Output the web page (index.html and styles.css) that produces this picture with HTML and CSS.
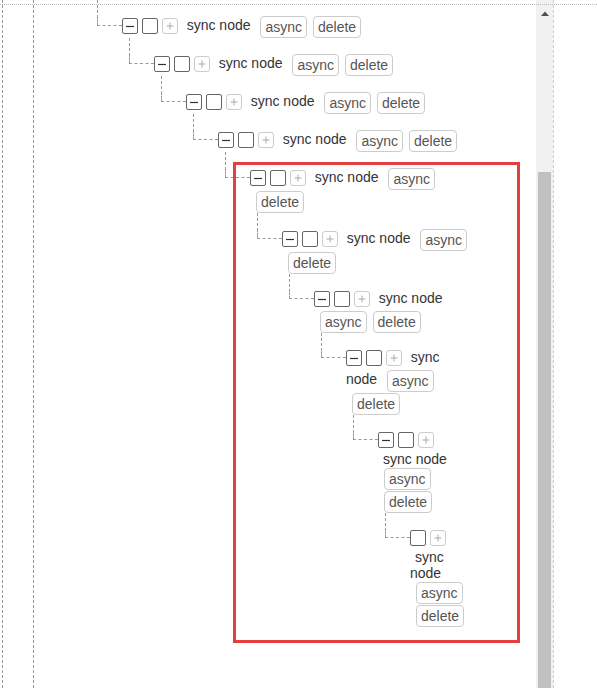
FILE: index.html
```html
<!DOCTYPE html>
<html lang="en">
<head>
<meta charset="utf-8">
<title>Tree</title>
<link rel="stylesheet" href="styles.css">
</head>
<body>
<div class="viewport">
  <div class="panel">
    <div class="content">
      <div class="guide">
        <ul class="tree">
          <li class="node">
            <div class="row"><span class="box"><svg width="14" height="14" viewBox="0 0 14 14"><path d="M3 7.5h8" stroke="#333" stroke-width="1.2"/></svg></span> <span class="box"></span> <span class="box box-plus"><svg width="14" height="14" viewBox="0 0 14 14"><path d="M3.5 7h7M7 3.5v7" stroke="#aaa"/></svg></span> <span class="title">sync node</span> <button class="btn">async</button><button class="btn">delete</button></div>
            <ul class="children">
              <li class="node">
                <div class="row"><span class="box"><svg width="14" height="14" viewBox="0 0 14 14"><path d="M3 7.5h8" stroke="#333" stroke-width="1.2"/></svg></span> <span class="box"></span> <span class="box box-plus"><svg width="14" height="14" viewBox="0 0 14 14"><path d="M3.5 7h7M7 3.5v7" stroke="#aaa"/></svg></span> <span class="title">sync node</span> <button class="btn">async</button><button class="btn">delete</button></div>
                <ul class="children">
                  <li class="node">
                    <div class="row"><span class="box"><svg width="14" height="14" viewBox="0 0 14 14"><path d="M3 7.5h8" stroke="#333" stroke-width="1.2"/></svg></span> <span class="box"></span> <span class="box box-plus"><svg width="14" height="14" viewBox="0 0 14 14"><path d="M3.5 7h7M7 3.5v7" stroke="#aaa"/></svg></span> <span class="title">sync node</span> <button class="btn">async</button><button class="btn">delete</button></div>
                    <ul class="children">
                      <li class="node">
                        <div class="row"><span class="box"><svg width="14" height="14" viewBox="0 0 14 14"><path d="M3 7.5h8" stroke="#333" stroke-width="1.2"/></svg></span> <span class="box"></span> <span class="box box-plus"><svg width="14" height="14" viewBox="0 0 14 14"><path d="M3.5 7h7M7 3.5v7" stroke="#aaa"/></svg></span> <span class="title">sync node</span> <button class="btn">async</button><button class="btn">delete</button></div>
                        <ul class="children">
                          <li class="node">
                            <div class="row"><span class="box"><svg width="14" height="14" viewBox="0 0 14 14"><path d="M3 7.5h8" stroke="#333" stroke-width="1.2"/></svg></span> <span class="box"></span> <span class="box box-plus"><svg width="14" height="14" viewBox="0 0 14 14"><path d="M3.5 7h7M7 3.5v7" stroke="#aaa"/></svg></span> <span class="title">sync node</span> <button class="btn">async</button><button class="btn">delete</button></div>
                            <ul class="children">
                              <li class="node">
                                <div class="row"><span class="box"><svg width="14" height="14" viewBox="0 0 14 14"><path d="M3 7.5h8" stroke="#333" stroke-width="1.2"/></svg></span> <span class="box"></span> <span class="box box-plus"><svg width="14" height="14" viewBox="0 0 14 14"><path d="M3.5 7h7M7 3.5v7" stroke="#aaa"/></svg></span> <span class="title">sync node</span> <button class="btn">async</button><button class="btn">delete</button></div>
                                <ul class="children">
                                  <li class="node">
                                    <div class="row"><span class="box"><svg width="14" height="14" viewBox="0 0 14 14"><path d="M3 7.5h8" stroke="#333" stroke-width="1.2"/></svg></span> <span class="box"></span> <span class="box box-plus"><svg width="14" height="14" viewBox="0 0 14 14"><path d="M3.5 7h7M7 3.5v7" stroke="#aaa"/></svg></span> <span class="title">sync node</span> <button class="btn">async</button><button class="btn">delete</button></div>
                                    <ul class="children">
                                      <li class="node">
                                        <div class="row"><span class="box"><svg width="14" height="14" viewBox="0 0 14 14"><path d="M3 7.5h8" stroke="#333" stroke-width="1.2"/></svg></span> <span class="box"></span> <span class="box box-plus"><svg width="14" height="14" viewBox="0 0 14 14"><path d="M3.5 7h7M7 3.5v7" stroke="#aaa"/></svg></span> <span class="title">sync node</span> <button class="btn">async</button><button class="btn">delete</button></div>
                                        <ul class="children">
                                          <li class="node">
                                            <div class="row"><span class="box"><svg width="14" height="14" viewBox="0 0 14 14"><path d="M3 7.5h8" stroke="#333" stroke-width="1.2"/></svg></span> <span class="box"></span> <span class="box box-plus"><svg width="14" height="14" viewBox="0 0 14 14"><path d="M3.5 7h7M7 3.5v7" stroke="#aaa"/></svg></span> <span class="title">sync node</span> <button class="btn">async</button><button class="btn">delete</button></div>
                                            <ul class="children">
                                              <li class="node">
                                                <div class="row"><span class="box"></span> <span class="box box-plus"><svg width="14" height="14" viewBox="0 0 14 14"><path d="M3.5 7h7M7 3.5v7" stroke="#aaa"/></svg></span> <span class="title">sync node</span> <button class="btn">async</button><button class="btn">delete</button></div>
                                              </li>
                                            </ul>
                                          </li>
                                        </ul>
                                      </li>
                                    </ul>
                                  </li>
                                </ul>
                              </li>
                            </ul>
                          </li>
                        </ul>
                      </li>
                    </ul>
                  </li>
                </ul>
              </li>
            </ul>
          </li>
        </ul>
      </div>
    </div>
    <div class="scrollbar">
      <div class="sb-up"><svg width="8" height="5" viewBox="0 0 8 5"><path d="M0 5L4 0.5L8 5Z" fill="#505050"/></svg></div>
      <div class="sb-space"></div>
      <div class="sb-thumb"></div>
    </div>
  </div>
  <div class="top-rule"></div>
  <div class="highlight"></div>
</div>
</body>
</html>
```
FILE: styles.css
```css
html, body {
  margin: 0;
  padding: 0;
  height: 688px;
  overflow: hidden;
  background: #fff;
}
body {
  font-family: "Liberation Sans", Arial, sans-serif;
  font-size: 14px;
  color: #333;
}
.viewport {
  position: relative;
  width: 597px;
  height: 688px;
  overflow: hidden;
}
.panel {
  display: flex;
  margin-left: 2px;
  width: 550px;
  height: 688px;
  border-left: 1px dashed #999;
  border-right: 1px dashed #ccc;
}
.content {
  flex: 1;
  padding-left: 30px;
  overflow: hidden;
}
.guide {
  width: 435px;
  height: 100%;
  border-left: 1px dashed #999;
}
.tree, .children {
  list-style: none;
  margin: 0;
}
.tree {
  padding: 0 0 0 88px;
}
.children {
  padding: 0 0 0 32px;
}
.node {
  position: relative;
  padding-top: 15px;
}
/* vertical part of the connector, from the parent down to this row */
.node::before {
  content: "";
  position: absolute;
  left: -25px;
  top: 0;
  height: 18px;
  border-left: 1px dashed #999;
}
.box {
  position: relative;
  display: inline-block;
  width: 16px;
  height: 16px;
  box-sizing: border-box;
  margin: 2px 0 3px;
  border: 1px solid #666;
  border-radius: 2px;
  background: #fff;
  vertical-align: middle;
}
/* elbow of the connector, joined to the first box of a row */
.row > .box:first-child::before {
  content: "";
  position: absolute;
  left: -26px;
  top: -3px;
  width: 24px;
  height: 9px;
  border-left: 1px dashed #999;
  border-bottom: 1px dashed #999;
}
.box svg {
  display: block;
}
.box-plus {
  border-color: #ccc;
  border-radius: 3px;
}
.title {
  margin-left: 5px;
  color: #333;
}
.btn {
  display: inline-block;
  height: 22px;
  box-sizing: border-box;
  margin: 1px 0 0 6px;
  padding: 0 4px;
  border: 1px solid #ccc;
  border-radius: 4px;
  background: #fff;
  color: #555;
  font-family: inherit;
  font-size: 14px;
  line-height: 20px;
  vertical-align: middle;
}
.scrollbar {
  width: 17px;
  background: #f1f1f1;
  display: flex;
  flex-direction: column;
  padding-top: 5px;
  box-sizing: border-box;
}
.sb-up {
  height: 17px;
  display: flex;
  align-items: center;
  justify-content: center;
}
.sb-up svg {
  display: block;
}
.sb-space {
  height: 150px;
}
.sb-thumb {
  flex: 1;
  margin: 0 2px;
  background: #c1c1c1;
}
.top-rule {
  position: absolute;
  left: 0;
  right: 0;
  top: 4px;
  border-top: 1px dotted #bbb;
}
.highlight {
  position: absolute;
  left: 233px;
  top: 162px;
  width: 287px;
  height: 481px;
  box-sizing: border-box;
  border: 3px solid #e53e3e;
}
```
